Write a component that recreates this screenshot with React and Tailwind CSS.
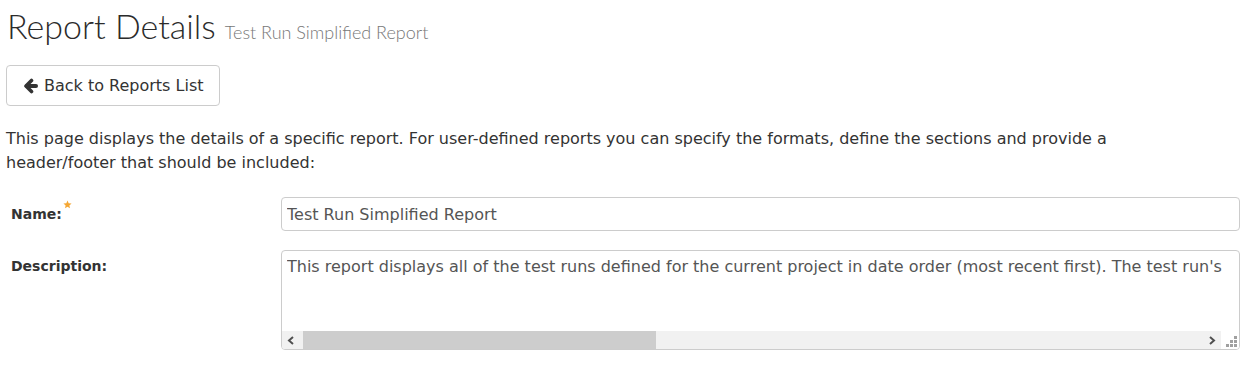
import React from 'react';

const description =
  "This report displays all of the test runs defined for the current project in date order (most recent first). The test run's information is displayed along with the name of the test case, the release and the test set it belongs to.";

const App = () => {
  return (
    <div className="min-h-screen bg-white text-[#333] font-['DejaVu_Sans',sans-serif]">
      {/* Page Title */}
      <div className="pl-[7px] pt-[5px] flex items-baseline gap-[9px]">
        <h1 className="text-[34px] leading-[41px] font-light text-[#2b2b2b] font-['Lato',sans-serif]">
          Report Details
        </h1>
        <span className="text-[18px] text-[#777] font-light font-['Lato',sans-serif]">
          Test Run Simplified Report
        </span>
      </div>

      {/* Back button */}
      <div className="pl-[6px] mt-[19px]">
        <button className="h-[41px] pl-[16px] pr-[15px] flex items-center gap-[6px] border border-[#ccc] rounded-[4px] bg-white text-[16px] text-[#333]">
          <svg className="w-[15px] h-[16px]" viewBox="0 0 15 16" fill="none" stroke="currentColor">
            <path d="M13 8H4" strokeWidth="4" strokeLinecap="round" />
            <path d="M8.5 2.5L3 8l5.5 5.5" strokeWidth="3.6" strokeLinecap="round" strokeLinejoin="round" />
          </svg>
          Back to Reports List
        </button>
      </div>

      {/* Intro */}
      <p className="pl-[6px] w-[1140px] mt-[21px] text-[16px] leading-[24px]">
        This page displays the details of a specific report. For user-defined reports you can specify the formats, define the sections and provide a header/footer that should be included:
      </p>

      {/* Form */}
      <div className="mt-[22px] pl-[11px] pr-[9px] flex flex-col gap-[19px]">
        <div className="flex items-center">
          <label className="w-[270px] text-[14px] font-bold text-[#333] flex items-start">
            Name:
            <svg className="w-[9px] h-[9px] ml-[1px] -mt-[4px]" viewBox="0 0 24 24" fill="#f5a733">
              <path d="M12 1.5l3.1 7.1 7.7.7-5.8 5.1 1.7 7.6L12 18l-6.7 4 1.7-7.6L1.2 9.3l7.7-.7z" />
            </svg>
          </label>
          <input
            type="text"
            defaultValue="Test Run Simplified Report"
            className="flex-1 h-[34px] px-[5px] border border-[#ccc] rounded-[4px] text-[16px] text-[#555] outline-none font-['DejaVu_Sans',sans-serif]"
          />
        </div>
        <div className="flex items-start">
          <label className="w-[270px] pt-[6px] text-[14px] font-bold text-[#333]">
            Description:
          </label>
          <div className="flex-1 h-[100px] border border-[#ccc] rounded-[4px] flex flex-col overflow-hidden">
            <div className="flex-1 pl-[5px] pr-[13px] pt-[5px]">
              <div className="overflow-hidden whitespace-nowrap text-[16px] leading-[22px] text-[#555]">
                {description}
              </div>
            </div>
            {/* horizontal scrollbar */}
            <div className="h-[18px] flex items-stretch">
              <div className="w-[18px] bg-[#f1f1f1] flex items-center justify-center">
                <svg className="w-[8px] h-[9px]" viewBox="0 0 8 9">
                  <path d="M6 1L2 4.5L6 8" fill="none" stroke="#505050" strokeWidth="2" />
                </svg>
              </div>
              <div className="flex-1 bg-[#f1f1f1] flex items-stretch pl-[3px]">
                <div className="w-[353px] bg-[#cdcdcd]" />
              </div>
              <div className="w-[18px] bg-[#f1f1f1] flex items-center justify-center">
                <svg className="w-[8px] h-[9px]" viewBox="0 0 8 9">
                  <path d="M2 1L6 4.5L2 8" fill="none" stroke="#505050" strokeWidth="2" />
                </svg>
              </div>
              <div className="w-[18px] bg-white flex items-end justify-end pr-[2px] pb-[2px]">
                <svg className="w-[11px] h-[11px]" viewBox="0 0 11 11" fill="#a0a0a0">
                  <rect x="8" y="0" width="3" height="3" />
                  <rect x="4" y="4" width="3" height="3" />
                  <rect x="8" y="4" width="3" height="3" />
                  <rect x="0" y="8" width="3" height="3" />
                  <rect x="4" y="8" width="3" height="3" />
                  <rect x="8" y="8" width="3" height="3" />
                </svg>
              </div>
            </div>
          </div>
        </div>
      </div>
    </div>
  );
};

export default App;
